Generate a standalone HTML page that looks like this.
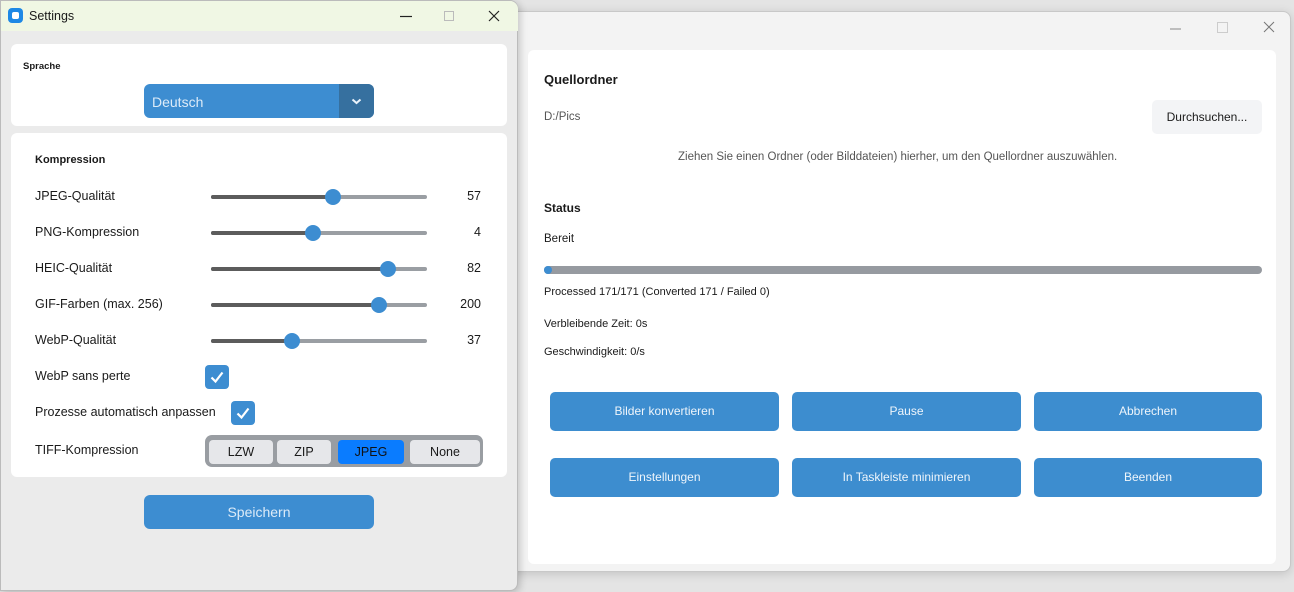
<!DOCTYPE html>
<html><head><meta charset="utf-8"><style>
*{box-sizing:border-box;margin:0;padding:0}
body{width:1294px;height:592px;overflow:hidden;background:#e4e4e4;font-family:"Liberation Sans",sans-serif;position:relative;color:#1a1a1a}
.abs{position:absolute}
.main{left:505px;top:11px;width:786px;height:561px;background:#f3f3f3;border:1px solid #c8c8c8;border-radius:8px;box-shadow:0 2px 10px rgba(0,0,0,.15)}
.card{background:#fff;border-radius:6px}
.t{position:absolute;white-space:nowrap}
.btn{position:absolute;background:#3d8dcf;color:#eef5fb;border-radius:5px;font-size:12px;text-align:center;line-height:39px;height:39px;width:229px}
.set{left:0;top:0;width:518px;height:591px;background:#ebebeb;border:1px solid #bbb;border-radius:0 8px 8px 0;box-shadow:2px 2px 8px rgba(0,0,0,.2)}
.lbl{position:absolute;left:34px;font-size:12.5px;color:#1a1a1a}
.track{position:absolute;left:210px;width:216px;height:4px;border-radius:2px;background:#9a9ea3}
.track i{position:absolute;left:0;top:0;height:4px;border-radius:2px;background:#5c5c5c}
.track b{position:absolute;top:-6px;width:16px;height:16px;border-radius:50%;background:#3d8dd1;margin-left:-8px}
.val{position:absolute;right:36px;font-size:12.5px;width:40px;text-align:right}
.cb{position:absolute;width:24px;height:24px;border-radius:4px;background:#3d8dd1}
.seg{position:absolute;top:5px;height:24px;border-radius:4px;background:#e6e7ea;font-size:12.5px;text-align:center;line-height:24px}
</style></head><body>
<div class="abs main">
  <svg class="abs" style="left:663px;top:7px" width="110" height="20"><line x1="1" y1="10" x2="12" y2="10" stroke="#888" stroke-width="1"/><rect x="48.5" y="3.5" width="10" height="10" fill="none" stroke="#ccc"/><path d="M95 3l10 10M105 3L95 13" stroke="#777" stroke-width="1"/></svg>
  <div class="abs card" style="left:22px;top:38px;width:748px;height:514px">
    <div class="t" style="left:16px;top:22px;font-size:13px;font-weight:bold">Quellordner</div>
    <div class="t" style="left:16px;top:61px;font-size:11.5px;color:#555">D:/Pics</div>
    <div class="abs" style="left:624px;top:50px;width:110px;height:34px;background:#f3f4f6;border-radius:5px;font-size:12px;line-height:34px;text-align:center">Durchsuchen...</div>
    <div class="t" style="left:150px;top:101px;font-size:11.5px;color:#555">Ziehen Sie einen Ordner (oder Bilddateien) hierher, um den Quellordner auszuwählen.</div>
    <div class="t" style="left:16px;top:151px;font-size:12px;font-weight:bold">Status</div>
    <div class="t" style="left:16px;top:183px;font-size:11.5px">Bereit</div>
    <div class="abs" style="left:16px;top:216px;width:718px;height:8px;border-radius:4px;background:#969aa0"><div style="width:8px;height:8px;border-radius:4px;background:#3d8dd1"></div></div>
    <div class="t" style="left:16px;top:236px;font-size:11px">Processed 171/171 (Converted 171 / Failed 0)</div>
    <div class="t" style="left:16px;top:268px;font-size:11px">Verbleibende Zeit: 0s</div>
    <div class="t" style="left:16px;top:296px;font-size:11px">Geschwindigkeit: 0/s</div>
    <div class="btn" style="left:22px;top:342px">Bilder konvertieren</div>
    <div class="btn" style="left:264px;top:342px">Pause</div>
    <div class="btn" style="left:506px;top:342px;width:228px">Abbrechen</div>
    <div class="btn" style="left:22px;top:408px">Einstellungen</div>
    <div class="btn" style="left:264px;top:408px">In Taskleiste minimieren</div>
    <div class="btn" style="left:506px;top:408px;width:228px">Beenden</div>
  </div>
</div>
<div class="abs set">
  <div class="abs" style="left:0;top:0;width:517px;height:30px;background:#f0f7e4;border-radius:0 8px 0 0"></div>
  <div class="abs" style="left:7px;top:7px;width:15px;height:15px;border-radius:4px;background:#1e88e5"><div style="margin:4px;width:7px;height:7px;background:#fff;border-radius:2px"></div></div>
  <div class="t" style="left:28px;top:8px;font-size:12.5px">Settings</div>
  <svg class="abs" style="left:398px;top:6px" width="110" height="20"><line x1="1" y1="9.5" x2="13" y2="9.5" stroke="#222" stroke-width="1.2"/><rect x="45.5" y="4.5" width="9" height="9" fill="none" stroke="#bbb"/><path d="M90 4l10 10M100 4L90 14" stroke="#222" stroke-width="1.2"/></svg>
  <div class="abs card" style="left:10px;top:43px;width:496px;height:82px">
    <div class="t" style="left:12px;top:17px;font-size:9.5px;font-weight:bold">Sprache</div>
    <div class="abs" style="left:133px;top:40px;width:230px;height:34px;border-radius:6px;background:#3d8dd1;overflow:hidden">
      <div class="t" style="left:8px;top:10px;font-size:14px;color:#dcebf8">Deutsch</div>
      <div class="abs" style="left:195px;top:0;width:35px;height:34px;background:#36709f"><svg width="35" height="34"><path d="M13.5 15.5l4 3.5 4-3.5" fill="none" stroke="#eaf2fa" stroke-width="2"/></svg></div>
    </div>
  </div>
  <div class="abs card" style="left:10px;top:132px;width:496px;height:344px"></div>
  <div class="t" style="left:34px;top:153px;font-size:11px;font-weight:bold">Kompression</div>
  <div class="lbl" style="top:188px">JPEG-Qualität</div><div class="track" style="top:194px"><i style="width:122px"></i><b style="left:122px"></b></div><div class="val" style="top:188px">57</div>
  <div class="lbl" style="top:224px">PNG-Kompression</div><div class="track" style="top:230px"><i style="width:102px"></i><b style="left:102px"></b></div><div class="val" style="top:224px">4</div>
  <div class="lbl" style="top:260px">HEIC-Qualität</div><div class="track" style="top:266px"><i style="width:177px"></i><b style="left:177px"></b></div><div class="val" style="top:260px">82</div>
  <div class="lbl" style="top:296px">GIF-Farben (max. 256)</div><div class="track" style="top:302px"><i style="width:168px"></i><b style="left:168px"></b></div><div class="val" style="top:296px">200</div>
  <div class="lbl" style="top:332px">WebP-Qualität</div><div class="track" style="top:338px"><i style="width:81px"></i><b style="left:81px"></b></div><div class="val" style="top:332px">37</div>
  <div class="lbl" style="top:368px">WebP sans perte</div>
  <div class="cb" style="left:204px;top:364px"><svg width="24" height="24"><path d="M6.5 12.5l4 4 7-9" fill="none" stroke="#fff" stroke-width="2.2"/></svg></div>
  <div class="lbl" style="top:404px">Prozesse automatisch anpassen</div>
  <div class="cb" style="left:230px;top:400px"><svg width="24" height="24"><path d="M6.5 12.5l4 4 7-9" fill="none" stroke="#fff" stroke-width="2.2"/></svg></div>
  <div class="lbl" style="top:442px">TIFF-Kompression</div>
  <div class="abs" style="left:204px;top:434px;width:278px;height:32px;border-radius:7px;background:#999da2">
    <div class="seg" style="left:4px;width:64px">LZW</div>
    <div class="seg" style="left:72px;width:54px">ZIP</div>
    <div class="seg" style="left:133px;width:66px;background:#0a7cff;color:#111">JPEG</div>
    <div class="seg" style="left:205px;width:70px">None</div>
  </div>
  <div class="abs" style="left:143px;top:494px;width:230px;height:34px;border-radius:6px;background:#3d8dd1;color:#dcebf8;font-size:14px;text-align:center;line-height:34px">Speichern</div>
</div>
</body></html>
